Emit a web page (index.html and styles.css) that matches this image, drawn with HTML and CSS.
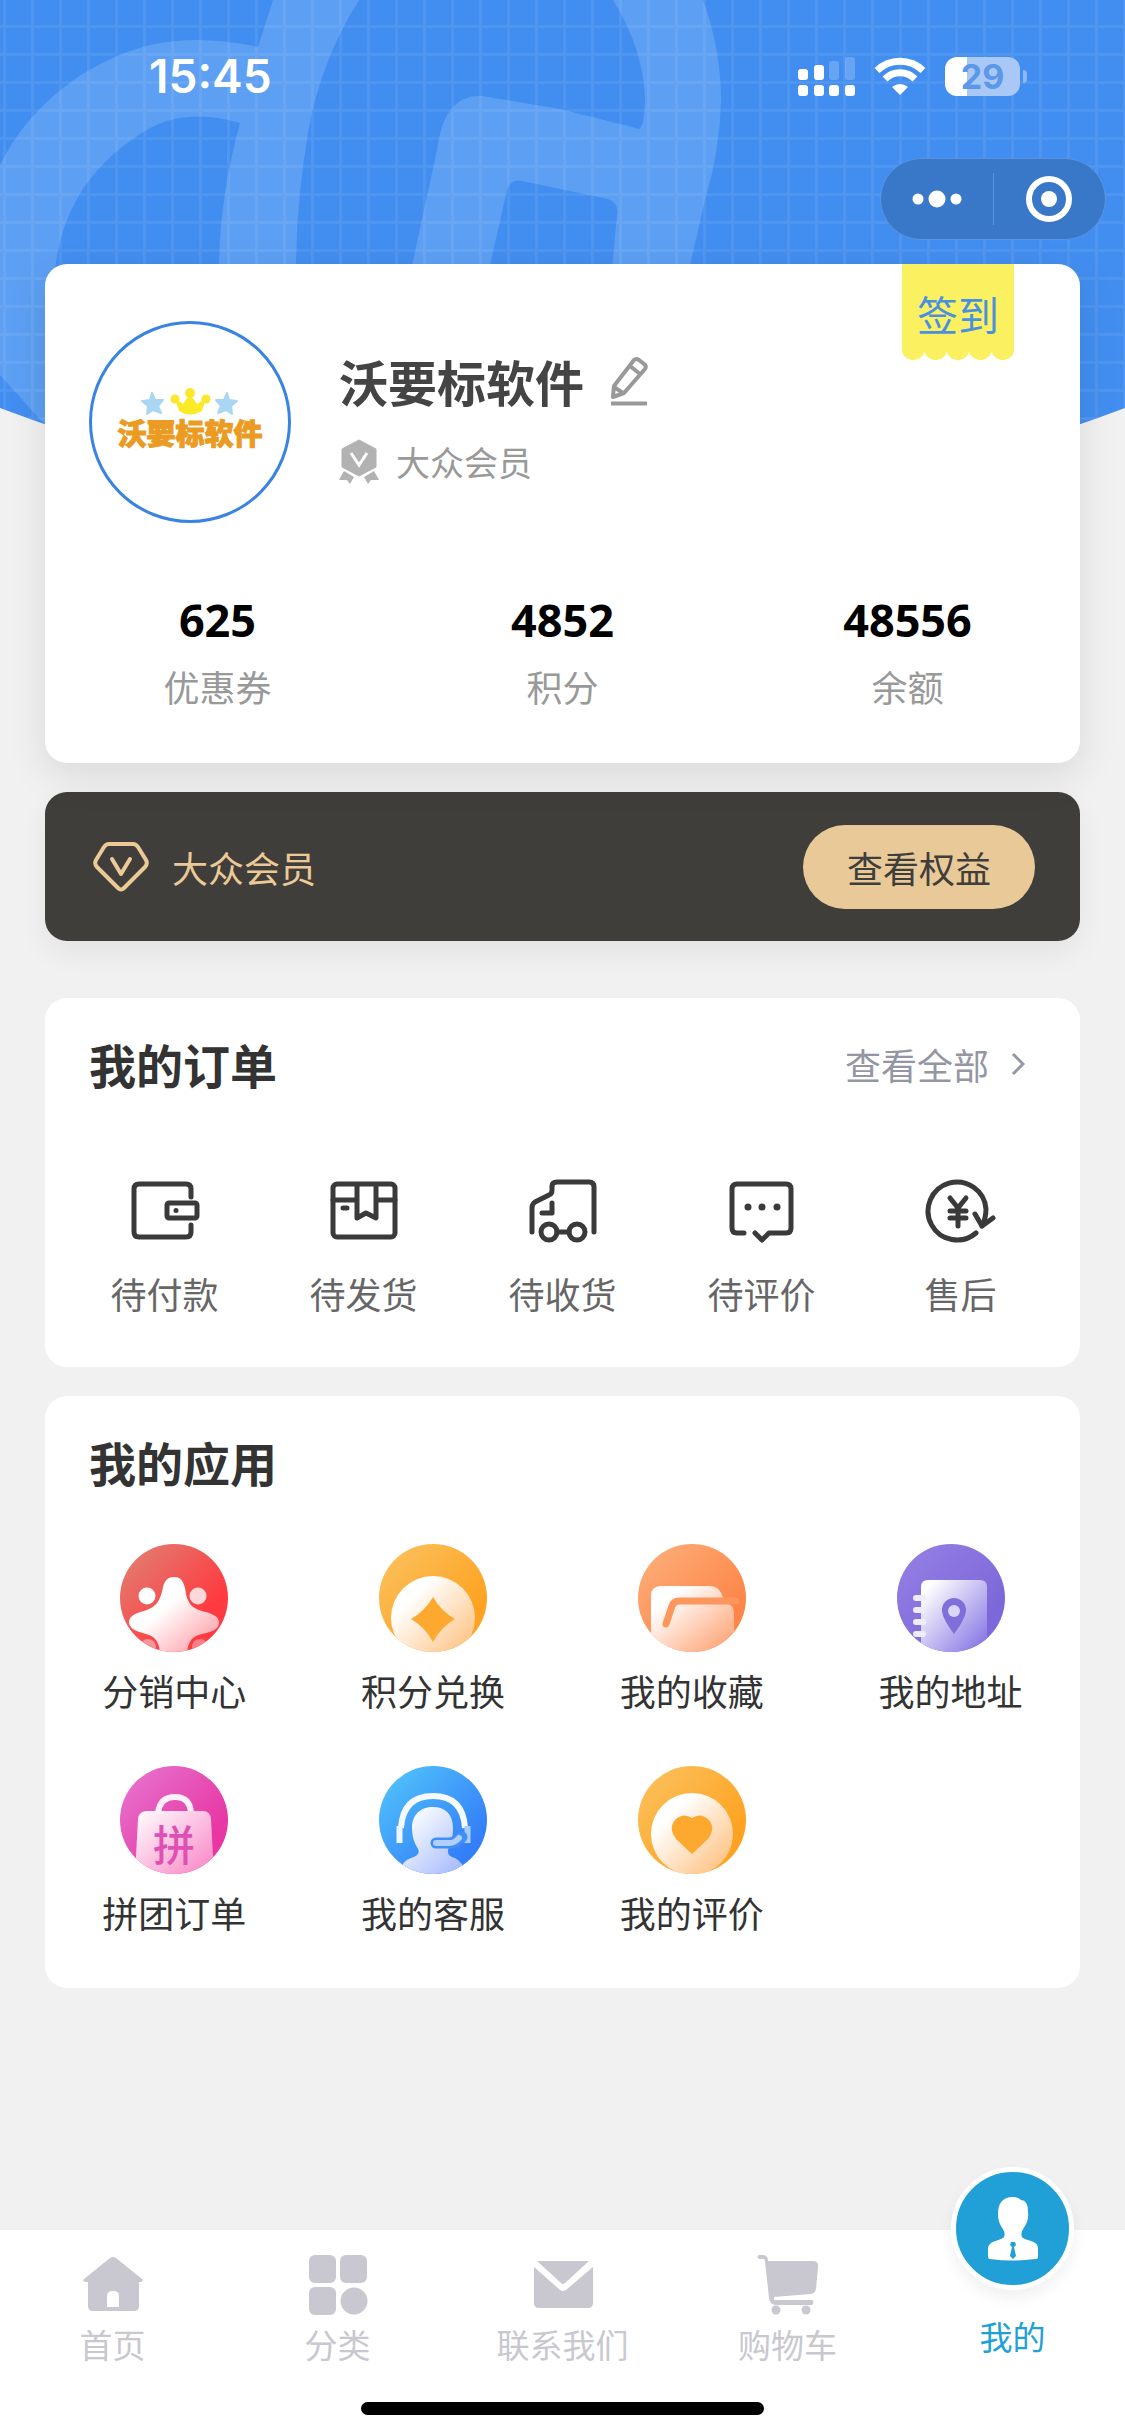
FILE: index.html
```html
<!DOCTYPE html>
<html lang="zh-CN">
<head>
  <meta charset="UTF-8">
  <meta name="viewport" content="width=device-width, initial-scale=1.0">
  <title>我的</title>
  <link rel="stylesheet" href="styles.css">
</head>
<body>
  <!-- Hero background -->
  <svg class="hero-bg" viewBox="0 0 1125 520" aria-hidden="true">
    <defs>
      <pattern id="grid" x="3" y="25" width="28" height="28" patternUnits="userSpaceOnUse">
        <path d="M0 1.500H28M1.500 0V28" stroke="#fff" stroke-opacity=".07" stroke-width="3"/>
      </pattern>
      <clipPath id="arc"><path d="M0 0H1125V408Q562 620 0 408Z"/></clipPath>
    </defs>
    <g clip-path="url(#arc)">
      <rect width="1125" height="520" fill="#428ef0"/>
      <g fill="#5d9ff3">
        <path d="M0 165C30 105 85 62 150 45Q200 34 258 47L273 0H359Q320 62 308 133T296 270H219Q219 200 240 123C205 112 170 115 145 131C90 165 62 210 55 270L45 425L0 375Z"/>
        <path d="M613 0H703Q721 50 721 100Q720 150 705 200L689 270H612L617 215Q619 203 608 199L522 181Q511 178 507 190L489 270H411L437 150Q444 94 482 96L560 109L636 128Q644 134 645 100Q644 50 613 0Z"/>
      </g>
      <rect width="1125" height="520" fill="url(#grid)"/>
    </g>
  </svg>

  <!-- Status bar -->
  <header class="status-bar">
    <span class="time">15:45</span>
    <div class="status-icons">
      <svg width="57" height="39" viewBox="0 0 57 39" fill="#fff" aria-hidden="true">
        <rect y="12" width="10" height="11" rx="3"/><rect x="16" y="8" width="10" height="15" rx="3"/>
        <rect x="31" y="4" width="10" height="19" rx="3" opacity=".2"/><rect x="47" width="10" height="23" rx="3" opacity=".2"/>
        <rect y="28" width="10" height="11" rx="3"/><rect x="16" y="28" width="10" height="11" rx="3"/>
        <rect x="31" y="28" width="10" height="11" rx="3"/><rect x="47" y="28" width="10" height="11" rx="3"/>
      </svg>
      <svg width="52" height="39" viewBox="0 0 52 39" aria-hidden="true">
        <g fill="none" stroke="#fff" stroke-width="7"><path d="M3 13.500A33 33 0 0 1 49 13.500"/><path d="M11 22A21 21 0 0 1 41 22"/></g>
        <path d="M18 30Q26 24 34 30L26 38Z" fill="#fff"/>
      </svg>
      <div class="battery"><span>29</span></div>
    </div>
  </header>

  <div class="capsule">
    <button class="capsule-btn" aria-label="更多">
      <svg width="50" height="20" viewBox="0 0 50 20" fill="#fff"><circle cx="6" cy="10" r="5.500"/><circle cx="25" cy="10" r="8.500"/><circle cx="44" cy="10" r="5.500"/></svg>
    </button>
    <button class="capsule-btn" aria-label="关闭">
      <svg width="46" height="46" viewBox="0 0 46 46"><circle cx="23" cy="23" r="20" fill="none" stroke="#fff" stroke-width="6"/><circle cx="23" cy="23" r="8" fill="#fff"/></svg>
    </button>
  </div>

  <main class="content">
    <!-- Profile -->
    <section class="card profile-card">
      <button class="sign-btn">签到</button>
      <div class="profile-header">
        <div class="avatar">
          <svg width="98" height="28" viewBox="0 0 98 28" aria-hidden="true">
            <g fill="#a9d6f3" stroke="#a9d6f3" stroke-width="2" stroke-linejoin="round">
              <path d="M11 5L14 12L22 12L17 18L20 25L12 22L6 26L7 18L1 13L9 12Z"/>
              <path d="M86 5L83 12L75 12L80 18L77 25L85 22L91 26L90 18L96 13L88 12Z"/>
            </g>
            <path d="M34 10L42 16L49 6L56 16L65 10L61 23Q49 30 38 23Z" fill="#fbea25"/>
            <g fill="#fbe82c"><circle cx="34" cy="11" r="4.500"/><circle cx="49" cy="5" r="5"/><circle cx="65" cy="11" r="4.500"/></g>
          </svg>
          <span class="avatar-text">沃要标软件</span>
        </div>
        <div class="profile-info">
          <div class="name-row">
            <h1>沃要标软件</h1>
            <button class="edit-btn" aria-label="编辑">
              <svg width="40" height="50" viewBox="0 0 40 50" fill="none" stroke="#999" stroke-width="4" stroke-linejoin="round"><path d="M4 40L5 30L25 4Q27 2 30 4L35 8Q38 10 36 13L15 37L4 41Z"/><path d="M21 10L31 18M5 31L14 37"/><path d="M2 47.500H38"/></svg>
            </button>
          </div>
          <div class="level-row">
            <svg width="40" height="46" viewBox="0 0 40 46" aria-hidden="true">
              <path d="M20 1L37 10V28L20 37L3 28V10Z" fill="#b2b2b2" stroke="#b2b2b2" stroke-width="1" stroke-linejoin="round"/>
              <path d="M5 32L15 38L11 45L8 41L0 41ZM35 32L25 38L29 45L32 41L40 41Z" fill="#b2b2b2"/>
              <path d="M12 14L20 26L28 14" fill="none" stroke="#fff" stroke-width="3"/>
            </svg>
            <span>大众会员</span>
          </div>
        </div>
      </div>
      <div class="stats">
        <div class="stat"><strong>625</strong><span>优惠券</span></div>
        <div class="stat"><strong>4852</strong><span>积分</span></div>
        <div class="stat"><strong>48556</strong><span>余额</span></div>
      </div>
    </section>

    <!-- Member level -->
    <section class="member-card">
      <svg width="58" height="52" viewBox="0 0 58 52" fill="none" stroke="#ebca98" stroke-width="4" stroke-linejoin="round" stroke-linecap="round" aria-hidden="true">
        <path d="M17 3H41Q44 3 46 6L54 19Q56 23 53 26L32 47Q29 50 26 47L5 26Q2 23 4 19L12 6Q14 3 17 3Z"/><path d="M20 18L29 33L38 18"/>
      </svg>
      <span class="member-name">大众会员</span>
      <button class="member-btn">查看权益</button>
    </section>

    <!-- Orders -->
    <section class="card orders">
      <div class="card-head">
        <h2>我的订单</h2>
        <a href="#orders" class="more">查看全部
          <svg width="14" height="24" viewBox="0 0 14 24" fill="none" stroke="#9496a3" stroke-width="3" aria-hidden="true"><path d="M2 2L12 12L2 22"/></svg>
        </a>
      </div>
      <nav class="order-list">
        <a href="#pay">
          <svg class="order-icon" viewBox="0 0 72 66"><path d="M62 19V11Q62 6 57 6H10Q5 6 5 11V54Q5 59 10 59H57Q62 59 62 54V47"/><rect x="38" y="25" width="30" height="15" rx="2"/><circle cx="47" cy="32.500" r="2.500" class="dot"/></svg>
          待付款
        </a>
        <a href="#ship">
          <svg class="order-icon" viewBox="0 0 72 66"><rect x="5" y="6" width="62" height="53" rx="4"/><path d="M5 22H29M48 22H67M29 7V40L38 35L48 40V7M15 30H19"/></svg>
          待发货
        </a>
        <a href="#receive">
          <svg class="order-icon" viewBox="0 0 72 66"><path d="M5 54V30Q5 26 8 24L22 17Q25 16 25 12V8Q25 4 30 4H62Q67 4 67 9V54M25 25V35H15"/><circle cx="22" cy="54" r="8"/><circle cx="50" cy="54" r="8"/><path d="M30 54H42"/></svg>
          待收货
        </a>
        <a href="#comment">
          <svg class="order-icon" viewBox="0 0 72 66"><path d="M18 55H11Q6 55 6 50V11Q6 6 11 6H60Q65 6 65 11V50Q65 55 60 55H43L36 62L29 55"/><g class="dot"><circle cx="22" cy="29" r="3.500"/><circle cx="36" cy="29" r="3.500"/><circle cx="51" cy="29" r="3.500"/></g></svg>
          待评价
        </a>
        <a href="#service">
          <svg class="order-icon" viewBox="0 0 72 66"><path d="M51 55A29 29 0 1 1 61 31Q61 40 57 48"/><path d="M50 36L57 48L68 40M25 20L33 30L41 20M33 30V48M25 33H41M25 40H41"/></svg>
          售后
        </a>
      </nav>
    </section>

    <!-- Apps -->
    <section class="card apps">
      <div class="card-head"><h2>我的应用</h2></div>
      <nav class="app-list">
        <a href="#share">
          <svg class="app-icon" viewBox="0 0 108 108">
            <defs>
              <clipPath id="round"><circle cx="54" cy="54" r="54"/></clipPath>
              <linearGradient id="red" x1="0" y1="0" x2="1" y2="1"><stop offset=".15" stop-color="#e5756b"/><stop offset=".7" stop-color="#ff3b41"/></linearGradient>
              <linearGradient id="redFront" x1="0" y1="0" x2="1" y2="1"><stop offset=".4" stop-color="#fff"/><stop offset="1" stop-color="#ff8f99"/></linearGradient>
            </defs>
            <g clip-path="url(#round)">
              <rect width="108" height="108" fill="url(#red)"/>
              <circle cx="27" cy="52" r="8.500" fill="#fff"/><circle cx="78" cy="52" r="8.500" fill="#ffd9da"/>
              <path d="M54 33C60 33 63 36 65 44C67 60 72 65 86 68C95 71 99 73 99 79C99 85 92 88 82 90C72 92 68 98 67 109H40C39 98 35 92 26 90C15 87 9 84 9 78C9 72 16 69 24 67C36 63 40 58 43 43C45 36 48 33 54 33Z" fill="url(#redFront)"/>
              <circle cx="28" cy="103" r="8" fill="#f3979b"/><circle cx="80" cy="103" r="8" fill="#fb8088"/>
            </g>
          </svg>
          分销中心
        </a>
        <a href="#points">
          <svg class="app-icon" viewBox="0 0 108 108">
            <defs>
              <linearGradient id="yellow" x1="0" y1="0" x2="1" y2="1"><stop offset=".15" stop-color="#fcbd55"/><stop offset=".75" stop-color="#fda321"/></linearGradient>
              <linearGradient id="yellowFront" x1="0" y1="0" x2="1" y2="1"><stop offset=".25" stop-color="#fff"/><stop offset=".85" stop-color="#fec78c"/></linearGradient>
            </defs>
            <g clip-path="url(#round)">
              <rect width="108" height="108" fill="url(#yellow)"/>
              <circle cx="54" cy="74" r="42" fill="url(#yellowFront)"/>
              <path d="M54 53Q62 67 76 75Q62 83 54 98Q46 83 32 75Q46 67 54 53Z" fill="#fda930"/>
            </g>
          </svg>
          积分兑换
        </a>
        <a href="#favorite">
          <svg class="app-icon" viewBox="0 0 108 108">
            <defs>
              <linearGradient id="orange" x1="0" y1="0" x2="1" y2="1"><stop offset=".15" stop-color="#fda873"/><stop offset=".75" stop-color="#fd8648"/></linearGradient>
              <linearGradient id="orangeFront" x1="0" y1="0" x2="1" y2="1"><stop offset=".2" stop-color="#fff"/><stop offset=".85" stop-color="#feac82"/></linearGradient>
            </defs>
            <g clip-path="url(#round)">
              <rect width="108" height="108" fill="url(#orange)"/>
              <path d="M13 109V52Q13 42 23 42H72Q82 42 85 54V60H90Q96 61 96 70V109Z" fill="url(#orangeFront)"/>
              <path d="M28 80L34 62Q36 57 41 57H98" fill="none" stroke="#fd965c" stroke-width="7" stroke-linecap="round"/>
            </g>
          </svg>
          我的收藏
        </a>
        <a href="#address">
          <svg class="app-icon" viewBox="0 0 108 108">
            <defs>
              <linearGradient id="purple" x1="0" y1="0" x2="1" y2="1"><stop offset=".15" stop-color="#917be3"/><stop offset=".75" stop-color="#7d68d9"/></linearGradient>
              <linearGradient id="purpleFront" x1="0" y1="0" x2="1" y2="1"><stop offset=".1" stop-color="#fff"/><stop offset=".9" stop-color="#8b7be5"/></linearGradient>
            </defs>
            <g clip-path="url(#round)">
              <rect width="108" height="108" fill="url(#purple)"/>
              <path d="M31 36H83Q90 36 90 43V109H24V43Q24 36 31 36Z" fill="url(#purpleFront)"/>
              <path d="M19 54H26M19 66H26M19 78H26M19 90H26" stroke="#efedfc" stroke-width="6" stroke-linecap="round"/>
              <path d="M57 90Q45 74 45 66A12 12 0 0 1 69 66Q69 74 57 90Z" fill="#806fda"/><circle cx="57" cy="67" r="6" fill="#d8d6fa"/>
            </g>
          </svg>
          我的地址
        </a>
        <a href="#group">
          <svg class="app-icon" viewBox="0 0 108 108">
            <defs>
              <linearGradient id="pink" x1="0" y1="0" x2="1" y2="1"><stop offset=".15" stop-color="#e66bc9"/><stop offset=".75" stop-color="#e836a2"/></linearGradient>
              <linearGradient id="pinkFront" x1="0" y1="0" x2="1" y2="1"><stop offset="0" stop-color="#fff"/><stop offset=".9" stop-color="#f98dca"/></linearGradient>
            </defs>
            <g clip-path="url(#round)">
              <rect width="108" height="108" fill="url(#pink)"/>
              <path d="M38 47Q40 31 55 31T71 47" fill="none" stroke="#fff0fa" stroke-width="6"/>
              <path d="M27 45H83Q90 45 91 53L94 109H15L18 53Q19 45 27 45Z" fill="url(#pinkFront)"/>
              <text x="54" y="95" text-anchor="middle" class="group-text">拼</text>
            </g>
          </svg>
          拼团订单
        </a>
        <a href="#kefu">
          <svg class="app-icon" viewBox="0 0 108 108">
            <defs>
              <linearGradient id="blue" x1="0" y1="0" x2="1" y2="1"><stop offset=".15" stop-color="#4dbbfb"/><stop offset=".8" stop-color="#347ef7"/></linearGradient>
              <linearGradient id="blueFront" x1="0" y1="0" x2="1" y2="1"><stop offset=".2" stop-color="#f4f9ff"/><stop offset=".9" stop-color="#a9bcfb"/></linearGradient>
            </defs>
            <g clip-path="url(#round)">
              <rect width="108" height="108" fill="url(#blue)"/>
              <path d="M33 62C33 48 42 41 54 41S74 48 74 62C74 74 71 79 69 84Q68 90 76 92Q84 96 88 109H20Q22 95 32 92Q42 89 39 83Q33 74 33 62Z" fill="url(#blueFront)"/>
              <path d="M22 62Q24 30 54 30T86 62" fill="none" stroke="#f4faff" stroke-width="6"/>
              <path d="M20.500 60V77" stroke="#eef6ff" stroke-width="6"/>
              <path d="M88.500 60V77" stroke="#a9ccfc" stroke-width="6"/>
              <path d="M83 71Q77 77 70 77H57" fill="none" stroke="#3f8ff8" stroke-width="11" stroke-linecap="round"/>
              <path d="M80 72Q76 77 70 77H57" fill="none" stroke="#b3cdfd" stroke-width="6" stroke-linecap="round"/>
            </g>
          </svg>
          我的客服
        </a>
        <a href="#reviews">
          <svg class="app-icon" viewBox="0 0 108 108">
            <g clip-path="url(#round)">
              <rect width="108" height="108" fill="url(#yellow)"/>
              <circle cx="54" cy="68" r="41" fill="url(#yellowFront)"/>
              <path d="M54 88L38 73Q30 62 37 54Q45 46 54 52Q63 46 71 54Q78 62 70 73Z" fill="#fda930"/>
            </g>
          </svg>
          我的评价
        </a>
      </nav>
    </section>
  </main>

  <!-- Tab bar -->
  <footer class="tab-bar">
    <nav class="tabs">
      <a href="#home">
        <svg class="tab-icon" viewBox="0 0 64 64"><path d="M29 5Q32 3 35 5L61 26Q63 28 60 29H58V53Q58 58 53 58H12Q7 58 7 53V29H4Q1 28 3 26ZM26 54H38V43Q38 38 32 38T26 43Z" fill-rule="evenodd"/></svg>
        首页
      </a>
      <a href="#category">
        <svg class="tab-icon" viewBox="0 0 64 64"><rect x="3" y="2" width="27" height="28" rx="6"/><rect x="34" y="2" width="27" height="28" rx="6"/><rect x="3" y="34" width="27" height="28" rx="6"/><circle cx="48" cy="48" r="13.500"/></svg>
        分类
      </a>
      <a href="#contact">
        <svg class="tab-icon" viewBox="0 0 64 64"><path d="M6 8H58L34 30Q32 32 30 30Z"/><path d="M3 14L29 37Q32 39 35 37L62 14V50Q62 55 57 55H8Q3 55 3 50Z"/></svg>
        联系我们
      </a>
      <a href="#cart">
        <svg class="tab-icon" viewBox="0 0 64 64"><path d="M3 2H8Q12 3 12 8H58Q63 9 62 14L60 36Q59 41 54 41L18 44V47H56Q59 49 56 52H19Q14 51 13 45L9 8L8 6H3Q0 4 3 2Z"/><circle cx="20" cy="57" r="4.500"/><circle cx="50" cy="57" r="4.500"/></svg>
        购物车
      </a>
      <a href="#mine" class="active" aria-current="page">
        <span class="mine-circle">
          <svg width="52" height="64" viewBox="0 0 52 64" fill="#fff" aria-hidden="true"><path d="M26 0Q31 0 34 3Q41 3 41 15Q42 23 38 29Q33 36 35 40C38 44 51 43 51 51V60Q51 62 48 62Q26 65 3 62Q1 62 1 60V52C1 43 14 44 17 40Q19 36 14 29Q11 24 11 17Q11 0 26 0Z"/><path d="M24 45H28L29 48L27 50L29 59L26 62L23 59L25 50L23 48Z" fill="#219fd7"/></svg>
        </span>
        我的
      </a>
    </nav>
    <div class="home-indicator"></div>
  </footer>
</body>
</html>
```
FILE: styles.css
```css
* {
  margin: 0;
  padding: 0;
  box-sizing: border-box;
}

body {
  position: relative;
  display: flex;
  flex-direction: column;
  min-height: 100vh;
  background: #f1f1f1;
  color: #333;
  font-family: 'Noto Sans CJK SC', sans-serif;
  font-size: 36px;
  line-height: 52px;
}

a {
  color: inherit;
  text-decoration: none;
}

button {
  border: none;
  background: none;
  font-family: inherit;
  color: inherit;
  cursor: pointer;
}

svg {
  display: block;
  flex-shrink: 0;
}

.hero-bg {
  position: absolute;
  top: 0;
  left: 0;
  width: 100%;
  z-index: -1;
}

/* Status bar */
.status-bar {
  display: flex;
  justify-content: space-between;
  align-items: center;
  height: 152px;
  padding: 0 98px 0 149px;
  color: #fff;
}

.time {
  font-family: 'Inter', sans-serif;
  font-size: 46px;
  font-weight: 600;
}

.status-icons {
  display: flex;
  align-items: center;
  gap: 19px;
}

.battery {
  position: relative;
  width: 75px;
  height: 39px;
  margin-right: 7px;
  border-radius: 12px;
  background: linear-gradient(90deg, #fff 29%, #a9c8f6 29%);
  color: #5b98ea;
  font-family: 'Inter', sans-serif;
  font-size: 34px;
  font-weight: 700;
  line-height: 39px;
  text-align: center;
}

.battery::after {
  content: "";
  position: absolute;
  right: -7px;
  top: 13px;
  width: 4px;
  height: 13px;
  border-radius: 0 6px 6px 0;
  background: #8cb9f6;
}

/* Capsule menu */
.capsule {
  display: flex;
  align-self: flex-end;
  width: 226px;
  height: 82px;
  margin: 6px 19px 24px 0;
  border: 1px solid #5a94de;
  border-radius: 41px;
  background: #3978c9;
}

.capsule-btn {
  display: flex;
  flex: 1;
  align-items: center;
  justify-content: center;
  margin: 14px 0;
}

.capsule-btn + .capsule-btn {
  border-left: 1px solid #5a94de;
}

.content {
  display: flex;
  flex-direction: column;
  gap: 29px;
  padding: 0 45px;
}

.card {
  border-radius: 22px;
  background: #fff;
}

/* Profile */
.profile-card {
  position: relative;
  padding: 57px 0 51px;
  box-shadow: 0 12px 40px rgba(0, 0, 0, 0.1);
}

.sign-btn {
  position: absolute;
  top: 0;
  right: 66px;
  width: 112px;
  height: 87px;
  padding-top: 10px;
  background: #fbf05f;
  color: #4a90e2;
  font-size: 41px;
  line-height: 60px;
}

.sign-btn::after {
  content: "";
  position: absolute;
  top: 100%;
  left: 0;
  width: 100%;
  height: 9px;
  background: radial-gradient(ellipse 50% 100% at 50% 0, #fbf05f 96%, transparent) 0 0 / 20% 100%;
}

.profile-header {
  display: flex;
  gap: 48px;
  padding: 0 44px;
}

.avatar {
  display: flex;
  flex-direction: column;
  align-items: center;
  justify-content: center;
  width: 202px;
  height: 202px;
  padding-bottom: 8px;
  border: 3px solid #3983e3;
  border-radius: 50%;
}

.avatar-text {
  color: #eb9a22;
  font-size: 29px;
  font-weight: 900;
  line-height: 32px;
  -webkit-text-stroke: 1px #eb9a22;
}

.profile-info {
  padding-top: 25px;
}

.name-row,
.level-row {
  display: flex;
  align-items: center;
}

.name-row {
  gap: 25px;
}

.name-row h1 {
  color: #444;
  font-size: 49px;
  font-weight: 700;
  line-height: 70px;
}

.level-row {
  gap: 17px;
  margin-top: 22px;
  color: #999;
  font-size: 34px;
  line-height: 48px;
}

.stats {
  display: grid;
  grid-template-columns: repeat(3, 1fr);
  margin-top: 65px;
}

.stat {
  display: flex;
  flex-direction: column;
  align-items: center;
  gap: 8px;
  color: #999;
}

.stat strong {
  color: #000;
  font-family: 'Open Sans', sans-serif;
  font-size: 45px;
  line-height: 64px;
}

/* Member level */
.member-card {
  display: flex;
  align-items: center;
  gap: 22px;
  height: 149px;
  margin-bottom: 28px;
  padding: 0 45px 0 47px;
  border-radius: 22px;
  background: #403e3b;
  box-shadow: 0 12px 30px rgba(0, 0, 0, 0.06);
}

.member-name {
  color: #ebca98;
}

.member-btn {
  margin-left: auto;
  width: 232px;
  height: 84px;
  border-radius: 42px;
  background: #e9c998;
  color: #403e3b;
  font-size: 36px;
}

.card-head {
  display: flex;
  align-items: center;
  justify-content: space-between;
  padding: 0 55px 0 44px;
}

.card-head h2 {
  font-size: 47px;
  font-weight: 700;
  line-height: 68px;
}

.more {
  display: flex;
  align-items: center;
  gap: 22px;
  color: #9496a3;
}

/* Orders */
.orders {
  padding: 32px 0 48px;
}

.order-list {
  display: grid;
  grid-template-columns: repeat(5, 1fr);
  margin-top: 80px;
  padding: 0 20px;
  color: #666;
}

.order-list a {
  display: flex;
  flex-direction: column;
  align-items: center;
  gap: 23px;
}

.order-icon {
  width: 72px;
  height: 66px;
  fill: none;
  stroke: #3a3a3a;
  stroke-width: 5;
  stroke-linecap: round;
  stroke-linejoin: round;
}

.order-icon .dot {
  fill: #3a3a3a;
  stroke: none;
}

/* Apps */
.apps {
  padding: 32px 0 50px;
}

.app-list {
  display: grid;
  grid-template-columns: repeat(4, 1fr);
  row-gap: 50px;
  margin-top: 48px;
}

.app-list a {
  display: flex;
  flex-direction: column;
  align-items: center;
  gap: 12px;
}

.app-icon {
  width: 108px;
  height: 108px;
}

.group-text {
  fill: #e04fb2;
  font-size: 42px;
  font-weight: 500;
}

/* Tab bar */
.tab-bar {
  margin-top: auto;
  padding: 23px 0 21px;
  background: #fff;
}

.tabs {
  display: grid;
  grid-template-columns: repeat(5, 1fr);
  color: #c9c7cf;
  font-size: 33px;
  line-height: 48px;
}

.tabs a {
  display: flex;
  flex-direction: column;
  align-items: center;
  gap: 3px;
}

.tab-icon {
  width: 64px;
  height: 64px;
  fill: #c9c7cf;
}

.tabs .active {
  gap: 22px;
  margin-top: -86px;
  color: #219fd7;
}

.mine-circle {
  display: flex;
  align-items: center;
  justify-content: center;
  width: 123px;
  height: 123px;
  border: 5px solid #fff;
  border-radius: 50%;
  background: #219fd7;
  box-shadow: 0 8px 16px rgba(0, 0, 0, 0.06);
}

.home-indicator {
  width: 403px;
  height: 13px;
  margin: 34px auto 0;
  border-radius: 7px;
  background: #000;
}
```
